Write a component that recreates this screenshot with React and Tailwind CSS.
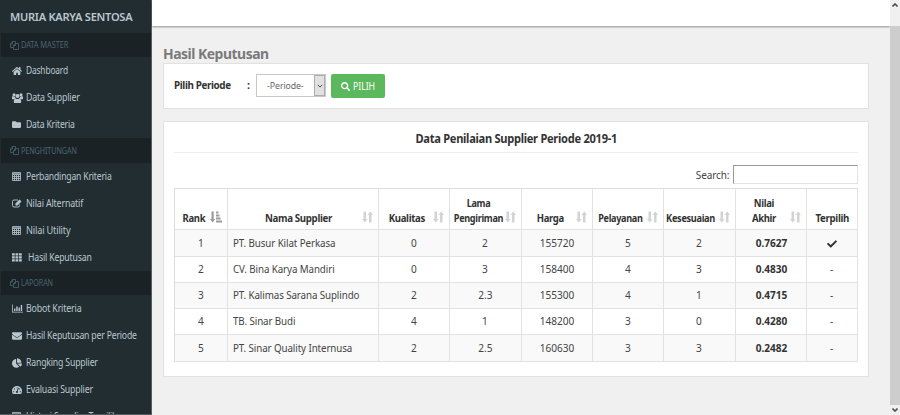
import React from "react";
import { FaFolder, FaEnvelope, FaSearch, FaCheck, FaHome, FaTachometerAlt, FaChartPie } from "react-icons/fa";

function Copy() {
  return (
    <svg viewBox="0 0 18 18" className="h-[9px] w-[9px] shrink-0" fill="none" stroke="currentColor" strokeWidth="1.6" strokeLinejoin="round">
      <path d="M6 13H1V6l4-5h6v4M1 6h4V1M7 9l4-4h6v12H7zM7 9h4V5" />
    </svg>
  );
}
function Users() {
  return (
    <svg viewBox="0 0 22 20" className="h-[10px] w-[11px]" fill="currentColor">
      <circle cx="4" cy="3.500" r="3" />
      <circle cx="18" cy="3.500" r="3" />
      <circle cx="11" cy="6" r="4.200" />
      <path d="M0 12V9c0-2 1-3 2-3 2 1.500 3 1.500 4 1 0 2 .5 3 1.500 4-1.500 0-2.500.5-3.500 1.500H1zM22 12V9c0-2-1-3-2-3-2 1.500-3 1.500-4 1 0 2-.5 3-1.500 4 1.500 0 2.500.5 3.500 1.500h3zM3.500 17.500c0-4 1.500-6.500 4-6.500 2 1.500 5 1.500 7 0 2.500 0 4 2.500 4 6.500 0 1.500-1 2.500-2.500 2.500H6c-1.500 0-2.500-1-2.500-2.500z" />
    </svg>
  );
}
function Calc() {
  return (
    <svg viewBox="0 0 18 18" className="h-[9px] w-[9px]" fill="none" stroke="currentColor" strokeWidth="1.6">
      <path d="M1 1h16v16H1zM1 3.500h16M1 5h16M1 9h16M1 13h16M5 6v11M9 6v11M13 6v11" />
    </svg>
  );
}
function Edit() {
  return (
    <svg viewBox="0 0 20 18" className="h-[9px] w-[10px]" fill="none" stroke="currentColor" strokeWidth="1.8">
      <path d="M12 2H4a3 3 0 0 0-3 3v8a3 3 0 0 0 3 3h8a3 3 0 0 0 3-3v-2" />
      <path d="M7 9l8-8 4 4-8 8H7z" fill="currentColor" stroke="none" />
    </svg>
  );
}
function Grid() {
  return (
    <svg viewBox="0 0 20 17" className="h-[9px] w-[10px]" fill="currentColor">
      <path d="M0 0h5.500v4.500H0zM7 0h5.500v4.500H7zM14 0h5.500v4.500H14zM0 6h5.500v4.500H0zM7 6h5.500v4.500H7zM14 6h5.500v4.500H14zM0 12h5.500v4.500H0zM7 12h5.500v4.500H7zM14 12h5.500v4.500H14z" />
    </svg>
  );
}
function Bars() {
  return (
    <svg viewBox="0 0 22 18" className="h-[9px] w-[11px]" fill="currentColor">
      <path d="M0 1h1.500v14.500H22V17H0zM4 9h2.800v5H4zM8.500 5h2.800v9H8.500zM13 7h2.800v7H13zM17.500 2h2.800v12h-2.800z" />
    </svg>
  );
}
function Sort() {
  return (
    <svg viewBox="0 0 11 12" className="h-3 w-[11px]" fill="#d3d3d3">
      <path d="M1.500 0.500h2.500v7.500H5.500L2.750 11.500 0 8h1.500zM7 11.500h2.500V4H11L8.250 0.500 5.500 4H7z" />
    </svg>
  );
}
function SortAsc() {
  return (
    <svg viewBox="0 0 12 12" className="h-3 w-3" fill="#9b9b9b">
      <path d="M1.500 0.500h2.200v7.500H5.200L2.600 11.500 0 8h1.500zM6 0.500h2.500v2H6zM6 3.500h3.500v2H6zM6 6.500h4.500v2H6zM6 9.500h6v2H6z" />
    </svg>
  );
}

const sections = [
  {
    title: "DATA MASTER",
    h: "h-6",
    scale: "scale-x-[0.93]",
    items: [
      [<FaHome size={10} />, "Dashboard", "scale-x-[0.84]"],
      [<Users />, "Data Supplier", "scale-x-[0.88]"],
      [<FaFolder size={9} />, "Data Kriteria", "scale-x-[0.86]"],
    ],
  },
  {
    title: "PENGHITUNGAN",
    h: "h-[25px]",
    scale: "scale-x-[0.9]",
    items: [
      [<Calc />, "Perbandingan Kriteria", "scale-x-[0.86]"],
      [<Edit />, "Nilai Alternatif", "scale-x-[0.89]"],
      [<Calc />, "Nilai Utility", "scale-x-[0.92]"],
      [<Grid />, "Hasil Keputusan", "scale-x-[0.87] ml-[2px]"],
    ],
  },
  {
    title: "LAPORAN",
    h: "h-6",
    scale: "scale-x-[0.89]",
    items: [
      [<Bars />, "Bobot Kriteria", "scale-x-[0.885]"],
      [<FaEnvelope size={10} />, "Hasil Keputusan per Periode", "scale-x-[0.865]"],
      [<FaChartPie size={10} />, "Rangking Supplier", "scale-x-[0.87]"],
      [<FaTachometerAlt size={10} />, "Evaluasi Supplier", "scale-x-[0.88]"],
      [<Calc />, "Histori Supplier Terpilih", "scale-x-[0.87]"],
    ],
  },
];

const rows = [
  ["1", "PT. Busur Kilat Perkasa", "0", "2", "155720", "5", "2", "0.7627", "check"],
  ["2", "CV. Bina Karya Mandiri", "0", "3", "158400", "4", "3", "0.4830", "-"],
  ["3", "PT. Kalimas Sarana Suplindo", "2", "2.3", "155300", "4", "1", "0.4715", "-"],
  ["4", "TB. Sinar Budi", "4", "1", "148200", "3", "0", "0.4280", "-"],
  ["5", "PT. Sinar Quality Internusa", "2", "2.5", "160630", "3", "3", "0.2482", "-"],
];
const heads = [
  ["Rank", "mr-[14px] scale-x-[0.95]"],
  ["Nama Supplier", "mr-[9px] scale-x-[0.97]"],
  ["Kualitas", "mr-[14px] scale-x-[0.96]"],
  ["Lama Pengiriman", "mr-[14px] w-[57px] scale-x-[0.91]"],
  ["Harga", "mr-[14px] scale-x-[0.95]"],
  ["Pelayanan", "mr-[16px] scale-x-[0.91]"],
  ["Kesesuaian", "mr-[17px] scale-x-[0.92]"],
  ["Nilai Akhir", "mr-[14px] w-[44px] scale-x-[0.95]"],
  ["Terpilih", "scale-x-[0.97]"],
];
const rowHeights = ["h-[27px]", "h-[26px]", "h-[26px]", "h-[26px]", "h-[27px]"];
const columns = "grid grid-cols-[53px_151px_71px_72px_71px_71px_72px_71px_51px]";

export default function App() {
  return (
    <div className="flex h-[415px] w-[900px] overflow-hidden bg-[#f0f0f0] font-['Noto_Sans',sans-serif] text-[10.5px] text-[#444]">
      <aside className="w-[152px] shrink-0 overflow-hidden border-b border-r border-[#555e62] bg-[#222d32] text-[#b8c7ce]">
        <div className="flex h-[33px] items-center whitespace-nowrap pl-[10px] text-[11.5px] font-semibold tracking-[-0.3px]">
          <span className="origin-left scale-x-[0.965]">MURIA KARYA SENTOSA</span>
        </div>
        {sections.map((s) => (
          <div key={s.title}>
            <div className={"flex items-center gap-[2px] border-l border-[#222d32] bg-[#1a2226] pl-[9px] text-[8px] tracking-[-0.1px] text-[#4b646f] " + s.h}>
              <Copy />
              <span className={"origin-left " + s.scale}>{s.title}</span>
            </div>
            {s.items.map(([icon, label, cls]) => (
              <div key={label} className="flex h-[27px] items-center whitespace-nowrap pl-3">
                <span className="flex w-[14px] shrink-0 items-center">{icon}</span>
                <span className={"origin-left text-[10px] tracking-[-0.2px] " + cls}>{label}</span>
              </div>
            ))}
          </div>
        ))}
      </aside>

      <div className="flex min-w-0 flex-1 flex-col">
        <header className="h-[26px] shrink-0 bg-white shadow-[0_1px_2px_rgba(0,0,0,0.4)]" />
        <main className="flex flex-col pl-[11px] pr-[21px]">
          <h1 className="flex h-[37px] items-end text-[14.5px] font-bold leading-[20px] tracking-[-0.5px] text-[#7a7a7a]">
            <span className="origin-left scale-x-[0.96]">Hasil Keputusan</span>
          </h1>
          <section className="flex h-[46px] w-[706px] items-start border border-[#e1e1e1] bg-white pl-[10px] pt-[10px]">
            <span className="w-[73px] origin-left scale-x-[0.94] whitespace-nowrap pt-[3px] text-[10.5px] font-bold leading-[16px] tracking-[-0.4px] text-[#333]">Pilih Periode</span>
            <span className="w-[9px] pt-[3px] font-bold leading-[16px] text-[#333]">:</span>
            <div className="flex h-[23px] w-[70px] border border-[#c8c8c8] bg-white">
              <span className="flex-1 origin-left scale-x-[0.92] whitespace-nowrap pl-[11px] text-[9.5px] leading-[22px] tracking-[-0.1px] text-[#666]">-Periode-</span>
              <span className="flex w-[11px] items-center justify-center border border-[#adadad] bg-[#e1e1e1]">
                <svg viewBox="0 0 8 5" className="h-[4px] w-[6px]" fill="none" stroke="#444" strokeWidth="1.3"><path d="M1 1l3 3 3-3" /></svg>
              </span>
            </div>
            <button className="ml-[5px] flex h-6 w-[54px] items-center gap-[3px] rounded-[2px] bg-[#5cb85c] pl-[10px] text-[10px] tracking-[-0.1px] text-white">
              <FaSearch size={9} />
              <span className="origin-left scale-x-[0.88]">PILIH</span>
            </button>
          </section>

          <section className="mt-3 flex h-[256px] w-[706px] flex-col border border-[#e1e1e1] bg-white px-[10px]">
            <h2 className="flex h-[31px] items-center justify-center border-b border-[#eee] pt-[3px] text-[11.5px] font-bold tracking-[-0.3px] text-[#333]">
              <span className="scale-x-[0.967]">Data Penilaian Supplier Periode 2019-1</span>
            </h2>
            <div className="flex h-[35px] items-start justify-end gap-1 pt-[12px]">
              <span className="origin-right scale-x-[0.95] leading-[20px] tracking-[-0.1px]">Search:</span>
              <span className="h-[19px] w-[125px] border border-[#e3e3e3] border-l-[#999] border-t-[#999] bg-white" />
            </div>
            <div className="w-[684px] border-l border-t border-[#ddd]">
              <div className={columns + " h-[41px]"}>
                {heads.map(([h, cls], i) => (
                  <div key={h} className="relative flex items-end justify-center border-b border-r border-[#e2e2e2] pb-[3px] text-center text-[10px] font-bold leading-[15px] tracking-[-0.35px] text-[#333]">
                    {i < 8 && <span className="absolute bottom-[6px] right-[5px]">{i === 0 ? <SortAsc /> : <Sort />}</span>}
                    <span className={"relative shrink-0 " + cls}>{h}</span>
                  </div>
                ))}
              </div>
              {rows.map((r, y) => (
                <div key={r[0]} className={columns + " " + rowHeights[y] + (y % 2 === 0 ? " bg-[#f9f9f9]" : " bg-white")}>
                  {r.map((c, i) => (
                    <div
                      key={i}
                      className={
                        "flex items-center whitespace-nowrap border-b border-r border-[#e2e2e2] pt-px " +
                        (i === 1 ? "pl-[5px] tracking-[-0.1px]" : "justify-center") +
                        (i === 7 ? " font-bold text-[#333]" : "")
                      }
                    >
                      {c === "check" ? <FaCheck size={10} color="#333" /> : <span className={i === 1 ? "origin-left scale-x-[0.93]" : "scale-x-[0.96]"}>{c}</span>}
                    </div>
                  ))}
                </div>
              ))}
            </div>
          </section>
        </main>
      </div>

      <div className="flex w-[10px] shrink-0 flex-col bg-[#f0f0f0]">
        <div className="flex h-[26px] justify-center pt-[3px]">
          <svg viewBox="0 0 6 4" className="h-[4px] w-[6px]" fill="none" stroke="#505050" strokeWidth="1.6"><path d="M0.500 3.500L3 1l2.500 2.500" /></svg>
        </div>
        <div className="h-[379px] bg-[#cdcdcd]" />
        <div className="flex h-[10px] items-center justify-center">
          <svg viewBox="0 0 6 4" className="h-[4px] w-[6px]" fill="none" stroke="#505050" strokeWidth="1.6"><path d="M0.500 0.500L3 3l2.500-2.500" /></svg>
        </div>
      </div>
    </div>
  );
}
